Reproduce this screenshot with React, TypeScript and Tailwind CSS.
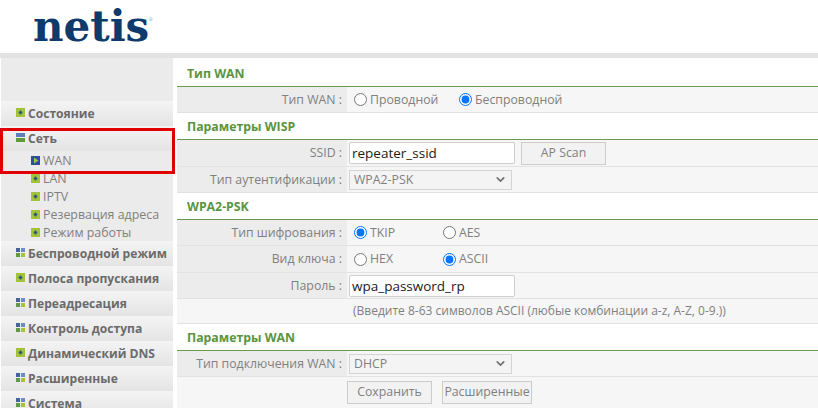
import { ChevronDown } from "lucide-react";

type IconKind = "plus" | "open" | "grid" | "active";

function NavIcon({ kind, lift }: { kind: IconKind; lift?: boolean }) {
  const cls = lift ? "mb-[2px] shrink-0" : "shrink-0";
  if (kind === "plus") {
    return (
      <svg width="9" height="9" viewBox="0 0 9 9" className={cls}>
        <rect width="9" height="9" fill="#a2c23c" />
        <path d="M4.5 2.3 L6.7 4.5 L4.5 6.7 L2.3 4.5 Z" fill="#2c5a78" />
      </svg>
    );
  }
  if (kind === "open") {
    return (
      <svg width="9" height="9" viewBox="0 0 9 9" className={cls}>
        <rect width="9" height="4" fill="#5f7fb8" />
        <rect y="5" width="9" height="4" fill="#5f9a3c" />
      </svg>
    );
  }
  if (kind === "active") {
    return (
      <svg width="9" height="9" viewBox="0 0 9 9" className={cls}>
        <rect width="9" height="9" fill="#2d4f96" />
        <path d="M3 1.5 L7.5 4.5 L3 7.5 Z" fill="#a2c23c" />
      </svg>
    );
  }
  return (
    <svg width="9" height="9" viewBox="0 0 9 9" className={cls}>
      <rect width="4" height="4" fill="#44639f" />
      <rect x="5" width="4" height="4" fill="#6b8cc4" />
      <rect y="5" width="4" height="4" fill="#5f9a3c" />
      <rect x="5" y="5" width="4" height="4" fill="#a6c23c" />
    </svg>
  );
}

function NavItem({ label, icon }: { label: string; icon: IconKind }) {
  return (
    <div className="flex h-[25px] shrink-0 items-center gap-[3px] whitespace-nowrap bg-gradient-to-b from-[#f4f4f4] to-[#e4e4e4] pl-[15px] text-[12.1px] font-bold text-[#6b6b6b]">
      <NavIcon kind={icon} lift />
      <span className="mt-[2px]">{label}</span>
    </div>
  );
}

function SubItem({ label, icon = "plus" }: { label: string; icon?: IconKind }) {
  return (
    <div className="flex h-[18px] items-center gap-[3px] whitespace-nowrap pl-[30px] pt-[1px] text-[12.4px] text-[#808080]">
      <NavIcon kind={icon} />
      <span className="mt-[2px]">{label}</span>
    </div>
  );
}

function SectionTitle({ title, height }: { title: string; height: string }) {
  return (
    <div className={`flex items-end border-b border-[#6a9a50] bg-white pb-[3px] pl-[10px] text-[12.3px] font-bold text-[#5b9440] ${height}`}>
      {title}
    </div>
  );
}

function Row({ label, height, children }: { label?: string; height: string; children: React.ReactNode }) {
  return (
    <div className={`flex border-b border-[#e2e2e2] ${height}`}>
      <div className="flex w-[170px] shrink-0 items-center justify-end bg-[#ececec] pr-[5px] pt-[1px] text-[12.3px] text-[#808080]">
        {label}
      </div>
      <div className="flex flex-1 items-center bg-[#f6f6f6] pl-[7px] text-[12.3px] text-[#808080]">{children}</div>
    </div>
  );
}

function Radio({ label, checked, width }: { label: string; checked?: boolean; width: string }) {
  return (
    <label className={`flex items-center gap-[3px] ${width}`}>
      <input type="radio" readOnly checked={!!checked} className="m-0 h-[13px] w-[13px] accent-[#0075ff]" />
      <span className="pt-[1px]">{label}</span>
    </label>
  );
}

function TextBox({ value }: { value: string }) {
  return (
    <input
      readOnly
      value={value}
      className="-ml-[5px] h-[22px] w-[166px] rounded-[2px] border border-[#cfcfcf] bg-white px-[2px] text-[13.5px] text-[#1a1a1a] outline-none"
    />
  );
}

function SelectBox({ value }: { value: string }) {
  return (
    <div className="-ml-[5px] flex h-[20px] w-[163px] items-center justify-between border border-[#d4d4d4] bg-[#f4f4f4] pl-[4px] pr-[4px] text-[12.3px] text-[#808080]">
      <span className="pt-[1px]">{value}</span>
      <ChevronDown size={13} strokeWidth={3} className="text-[#707070]" />
    </div>
  );
}

function GrayButton({ label, width }: { label: string; width: string }) {
  return (
    <button className={`h-[23px] border border-[#cccccc] bg-[#f2f2f2] text-[12.3px] text-[#808080] ${width}`}>
      {label}
    </button>
  );
}

export default function App() {
  return (
    <div className="relative flex h-[408px] w-[818px] flex-col overflow-hidden bg-white font-['Open_Sans','Noto_Sans',sans-serif]">
      <header className="flex h-[53px] shrink-0 items-start bg-white pl-[33px]">
        <span className="relative mt-[3px] font-['DejaVu_Serif',serif] text-[42px] font-bold leading-[48px] text-[#0e3a6c]">
          netis
          <span className="absolute -right-[4px] top-[14px] text-[5px] font-normal leading-none text-[#9aa7b5]">®</span>
        </span>
      </header>
      <div className="h-[5px] shrink-0 bg-[#e2e2e2]" />

      <div className="flex min-h-0 flex-1">
        <aside className="ml-[1px] flex w-[172px] shrink-0 flex-col bg-[#ebebeb] pt-[43px]">
          <NavItem label="Состояние" icon="plus" />
          <NavItem label="Сеть" icon="open" />
          <SubItem label="WAN" icon="active" />
          <SubItem label="LAN" />
          <SubItem label="IPTV" />
          <SubItem label="Резервация адреса" />
          <SubItem label="Режим работы" />
          <NavItem label="Беспроводной режим" icon="grid" />
          <NavItem label="Полоса пропускания" icon="plus" />
          <NavItem label="Переадресация" icon="grid" />
          <NavItem label="Контроль доступа" icon="grid" />
          <NavItem label="Динамический DNS" icon="plus" />
          <NavItem label="Расширенные" icon="grid" />
          <NavItem label="Система" icon="grid" />
        </aside>

        <main className="ml-[4px] flex-1">
          <SectionTitle title="Тип WAN" height="h-[29px]" />
          <Row label="Тип WAN :" height="h-[26px]">
            <Radio label="Проводной" width="w-[105px]" />
            <Radio label="Беспроводной" checked width="w-[120px]" />
          </Row>
          <SectionTitle title="Параметры WISP" height="h-[27px]" />
          <Row label="SSID :" height="h-[27px]">
            <TextBox value="repeater_ssid" />
            <div className="ml-[6px]">
              <GrayButton label="AP Scan" width="w-[85px]" />
            </div>
          </Row>
          <Row label="Тип аутентификации :" height="h-[26px]">
            <SelectBox value="WPA2-PSK" />
          </Row>
          <SectionTitle title="WPA2-PSK" height="h-[27px]" />
          <Row label="Тип шифрования :" height="h-[26px]">
            <Radio label="TKIP" checked width="w-[89px]" />
            <Radio label="AES" width="w-[60px]" />
          </Row>
          <Row label="Вид ключа :" height="h-[27px]">
            <Radio label="HEX" width="w-[89px]" />
            <Radio label="ASCII" checked width="w-[60px]" />
          </Row>
          <Row label="Пароль :" height="h-[26px]">
            <TextBox value="wpa_password_rp" />
          </Row>
          <div className="flex h-[25px] items-center border-b border-[#e2e2e2] bg-[#f6f6f6] pl-[176px] text-[12px] text-[#808080]">
            (Введите 8-63 символов ASCII (любые комбинации a-z, A-Z, 0-9.))
          </div>
          <SectionTitle title="Параметры WAN" height="h-[27px]" />
          <Row label="Тип подключения WAN :" height="h-[26px]">
            <SelectBox value="DHCP" />
          </Row>
          <div className="flex h-[31px] items-center gap-[10px] bg-[#f6f6f6] pl-[170px]">
            <GrayButton label="Сохранить" width="w-[85px]" />
            <GrayButton label="Расширенные" width="w-[90px]" />
          </div>
        </main>
      </div>

      {/* red highlight around the WAN entry */}
      <div className="pointer-events-none absolute left-0 top-[128px] h-[46px] w-[175px] border-[3px] border-[#e00000]" />
    </div>
  );
}
